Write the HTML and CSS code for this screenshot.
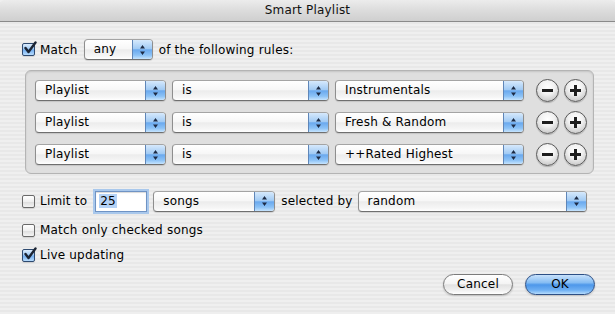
FILE: index.html
```html
<!DOCTYPE html>
<html>
<head>
<meta charset="utf-8">
<title>Smart Playlist</title>
<link rel="stylesheet" href="styles.css">
</head>
<body>
<div class="window">
  <div class="titlebar">Smart Playlist</div>
  <div class="content">
    <div class="row match-row">
      <span class="cb on"><svg class="check" width="14" height="14" viewBox="0 0 14 14"><path d="M2.5 7 L5.5 11 L12.5 1.5" fill="none" stroke="#1b2433" stroke-width="2.4" stroke-linecap="round" stroke-linejoin="round"/></svg></span>
      <span class="label">Match</span>
      <div class="popup p-any"><span class="ptext">any</span><span class="parrow"><svg width="7" height="12" viewBox="0 0 7 12"><path d="M3.5 1 L6 4.6 H1 Z M3.5 11 L6 7.4 H1 Z" fill="#1d2b45"/></svg></span></div>
      <span class="label gap6">of the following rules:</span>
    </div>

    <div class="rules">
      <div class="rule">
        <div class="popup p-field"><span class="ptext">Playlist</span><span class="parrow"><svg width="7" height="12" viewBox="0 0 7 12"><path d="M3.5 1 L6 4.6 H1 Z M3.5 11 L6 7.4 H1 Z" fill="#1d2b45"/></svg></span></div>
        <div class="popup p-op"><span class="ptext">is</span><span class="parrow"><svg width="7" height="12" viewBox="0 0 7 12"><path d="M3.5 1 L6 4.6 H1 Z M3.5 11 L6 7.4 H1 Z" fill="#1d2b45"/></svg></span></div>
        <div class="popup p-val"><span class="ptext">Instrumentals</span><span class="parrow"><svg width="7" height="12" viewBox="0 0 7 12"><path d="M3.5 1 L6 4.6 H1 Z M3.5 11 L6 7.4 H1 Z" fill="#1d2b45"/></svg></span></div>
        <span class="round minus"><span class="bar"></span></span>
        <span class="round plus"><span class="bar"></span><span class="bar vert"></span></span>
      </div>
      <div class="rule">
        <div class="popup p-field"><span class="ptext">Playlist</span><span class="parrow"><svg width="7" height="12" viewBox="0 0 7 12"><path d="M3.5 1 L6 4.6 H1 Z M3.5 11 L6 7.4 H1 Z" fill="#1d2b45"/></svg></span></div>
        <div class="popup p-op"><span class="ptext">is</span><span class="parrow"><svg width="7" height="12" viewBox="0 0 7 12"><path d="M3.5 1 L6 4.6 H1 Z M3.5 11 L6 7.4 H1 Z" fill="#1d2b45"/></svg></span></div>
        <div class="popup p-val"><span class="ptext">Fresh &amp; Random</span><span class="parrow"><svg width="7" height="12" viewBox="0 0 7 12"><path d="M3.5 1 L6 4.6 H1 Z M3.5 11 L6 7.4 H1 Z" fill="#1d2b45"/></svg></span></div>
        <span class="round minus"><span class="bar"></span></span>
        <span class="round plus"><span class="bar"></span><span class="bar vert"></span></span>
      </div>
      <div class="rule">
        <div class="popup p-field"><span class="ptext">Playlist</span><span class="parrow"><svg width="7" height="12" viewBox="0 0 7 12"><path d="M3.5 1 L6 4.6 H1 Z M3.5 11 L6 7.4 H1 Z" fill="#1d2b45"/></svg></span></div>
        <div class="popup p-op"><span class="ptext">is</span><span class="parrow"><svg width="7" height="12" viewBox="0 0 7 12"><path d="M3.5 1 L6 4.6 H1 Z M3.5 11 L6 7.4 H1 Z" fill="#1d2b45"/></svg></span></div>
        <div class="popup p-val"><span class="ptext">++Rated Highest</span><span class="parrow"><svg width="7" height="12" viewBox="0 0 7 12"><path d="M3.5 1 L6 4.6 H1 Z M3.5 11 L6 7.4 H1 Z" fill="#1d2b45"/></svg></span></div>
        <span class="round minus"><span class="bar"></span></span>
        <span class="round plus"><span class="bar"></span><span class="bar vert"></span></span>
      </div>
    </div>

    <div class="row limit-row">
      <span class="cb"></span>
      <span class="label">Limit to</span>
      <span class="field"><span class="sel">25</span></span>
      <div class="popup p-songs"><span class="ptext">songs</span><span class="parrow"><svg width="7" height="12" viewBox="0 0 7 12"><path d="M3.5 1 L6 4.6 H1 Z M3.5 11 L6 7.4 H1 Z" fill="#1d2b45"/></svg></span></div>
      <span class="label gap6">selected by</span>
      <div class="popup p-random"><span class="ptext">random</span><span class="parrow"><svg width="7" height="12" viewBox="0 0 7 12"><path d="M3.5 1 L6 4.6 H1 Z M3.5 11 L6 7.4 H1 Z" fill="#1d2b45"/></svg></span></div>
    </div>

    <div class="row check-row first">
      <span class="cb"></span>
      <span class="label">Match only checked songs</span>
    </div>
    <div class="row check-row second">
      <span class="cb on"><svg class="check" width="14" height="14" viewBox="0 0 14 14"><path d="M2.5 7 L5.5 11 L12.5 1.5" fill="none" stroke="#1b2433" stroke-width="2.4" stroke-linecap="round" stroke-linejoin="round"/></svg></span>
      <span class="label">Live updating</span>
    </div>

    <div class="buttons">
      <span class="btn cancel">Cancel</span>
      <span class="btn ok">OK</span>
    </div>
  </div>
</div>
</body>
</html>
```

FILE: styles.css
```css
* { box-sizing: border-box; }
html, body { margin: 0; padding: 0; background: #fff; }
body {
  font-family: "DejaVu Sans", "Liberation Sans", sans-serif;
  font-size: 12px;
  letter-spacing: 0.2px;
  color: #000;
}
.window {
  width: 615px;
  height: 314px;
  overflow: hidden;
  background: repeating-linear-gradient(#efefef 0 2px, #e8e8e8 2px 4px);
}
.titlebar {
  height: 22px;
  line-height: 21px;
  text-align: center;
  color: #111;
  border-bottom: 1px solid #8a8a8a;
  border-radius: 5px 5px 0 0;
  background: linear-gradient(#ececec, #dcdcdc 50%, #cfcfcf);
}
.content {
  padding-left: 22px;
}
.row {
  display: flex;
  align-items: center;
}
.match-row { margin-top: 17px; height: 21px; }
.label { margin-left: 5px; white-space: nowrap; }
.gap6 { margin-left: 6px; }
.match-row .popup { margin-left: 6px; }

/* checkbox */
.cb {
  position: relative;
  width: 13px;
  height: 13px;
  flex: none;
  border: 1px solid #6a6a6a;
  border-radius: 2px;
  background: linear-gradient(#ffffff, #f0f0f0 50%, #dcdcdc 51%, #f4f4f4);
  box-shadow: 0 1px 1px rgba(0,0,0,0.12);
}
.cb.on {
  border-color: #2e4a70;
  background: linear-gradient(#dcecfd, #9cc8f4 48%, #6eabef 52%, #b8dcfd);
}
.check {
  position: absolute;
  left: 0;
  top: -3px;
}

/* popups */
.popup {
  display: flex;
  height: 21px;
  flex: none;
  border: 1px solid #8e8e8e;
  border-top-color: #a4a4a4;
  border-bottom-color: #6f6f6f;
  border-radius: 4px;
  overflow: hidden;
  background: linear-gradient(#ffffff, #f7f7f7 45%, #ececec 52%, #f6f6f6 85%, #ffffff);
  box-shadow: 0 1px 1px rgba(0,0,0,0.12);
}
.ptext {
  flex: 1;
  padding-left: 9px;
  line-height: 19px;
  white-space: nowrap;
}
.parrow {
  width: 20px;
  flex: none;
  display: flex;
  align-items: center;
  justify-content: center;
  border-left: 1px solid #5f86b8;
  background: linear-gradient(#d6e9fc, #a2cbf4 45%, #6aa9ee 52%, #8cc2f6 80%, #c6e4fe);
}
.p-any { width: 69px; }
.p-field { width: 131px; }
.p-op { width: 157px; }
.p-val { width: 189px; }
.p-songs { width: 122px; margin-left: 6px; }
.p-random { width: 229px; margin-left: 5px; }

/* rules box */
.rules {
  margin-top: 10px;
  margin-left: 3px;
  width: 569px;
  height: 104px;
  padding: 9px 0 0 9px;
  border: 1px solid #b4b4b4;
  border-radius: 6px;
  background: #dfdfdf;
  box-shadow: inset 0 1px 2px rgba(0,0,0,0.12);
  display: flex;
  flex-direction: column;
  gap: 11px;
}
.rule {
  display: flex;
  align-items: center;
  gap: 6px;
  height: 21px;
}
.round {
  position: relative;
  width: 23px;
  height: 23px;
  flex: none;
  border-radius: 50%;
  border: 1px solid #5a5a5a;
  background: radial-gradient(circle at 50% 35%, #ffffff 0, #f2f2f2 40%, #cfcfcf 75%, #9d9d9d 100%);
  box-shadow: 0 1px 1px rgba(0,0,0,0.2);
}
.round.minus { margin-left: 6px; }
.round.plus { margin-left: -1px; }
.bar {
  position: absolute;
  left: 5px;
  top: 9px;
  width: 11px;
  height: 3px;
  background: #1e1e1e;
}
.bar.vert {
  left: 9px;
  top: 5px;
  width: 3px;
  height: 11px;
}

/* limit row */
.limit-row { margin-top: 16px; height: 22px; }
.field {
  width: 52px;
  height: 21px;
  margin-left: 8px;
  flex: none;
  border: 1px solid #6f93c4;
  background: #fff;
  box-shadow: 0 0 0 2px #a9c8ec, inset 0 1px 1px rgba(0,0,0,0.15);
  padding: 2px 0 0 3px;
  line-height: 15px;
}
.sel { background: #b5d3f7; padding: 0 1px; }

.check-row { height: 16px; }
.check-row.first { margin-top: 10px; }
.check-row.second { margin-top: 9px; }

/* buttons */
.buttons {
  display: flex;
  justify-content: flex-end;
  gap: 12px;
  margin-top: 11px;
  padding-right: 20px;
}
.btn {
  width: 70px;
  height: 21px;
  border-radius: 11px;
  text-align: center;
  line-height: 19px;
  border: 1px solid #7b7b7b;
  box-shadow: 0 1px 2px rgba(0,0,0,0.2);
}
.cancel {
  background: linear-gradient(#ffffff, #f4f4f4 45%, #e2e2e2 52%, #f0f0f0 80%, #ffffff);
}
.ok {
  border-color: #2d4f85;
  background: linear-gradient(#c7e1fb, #86bdf3 40%, #4d97ea 52%, #6fb0f3 80%, #b5dcfd);
}
```
